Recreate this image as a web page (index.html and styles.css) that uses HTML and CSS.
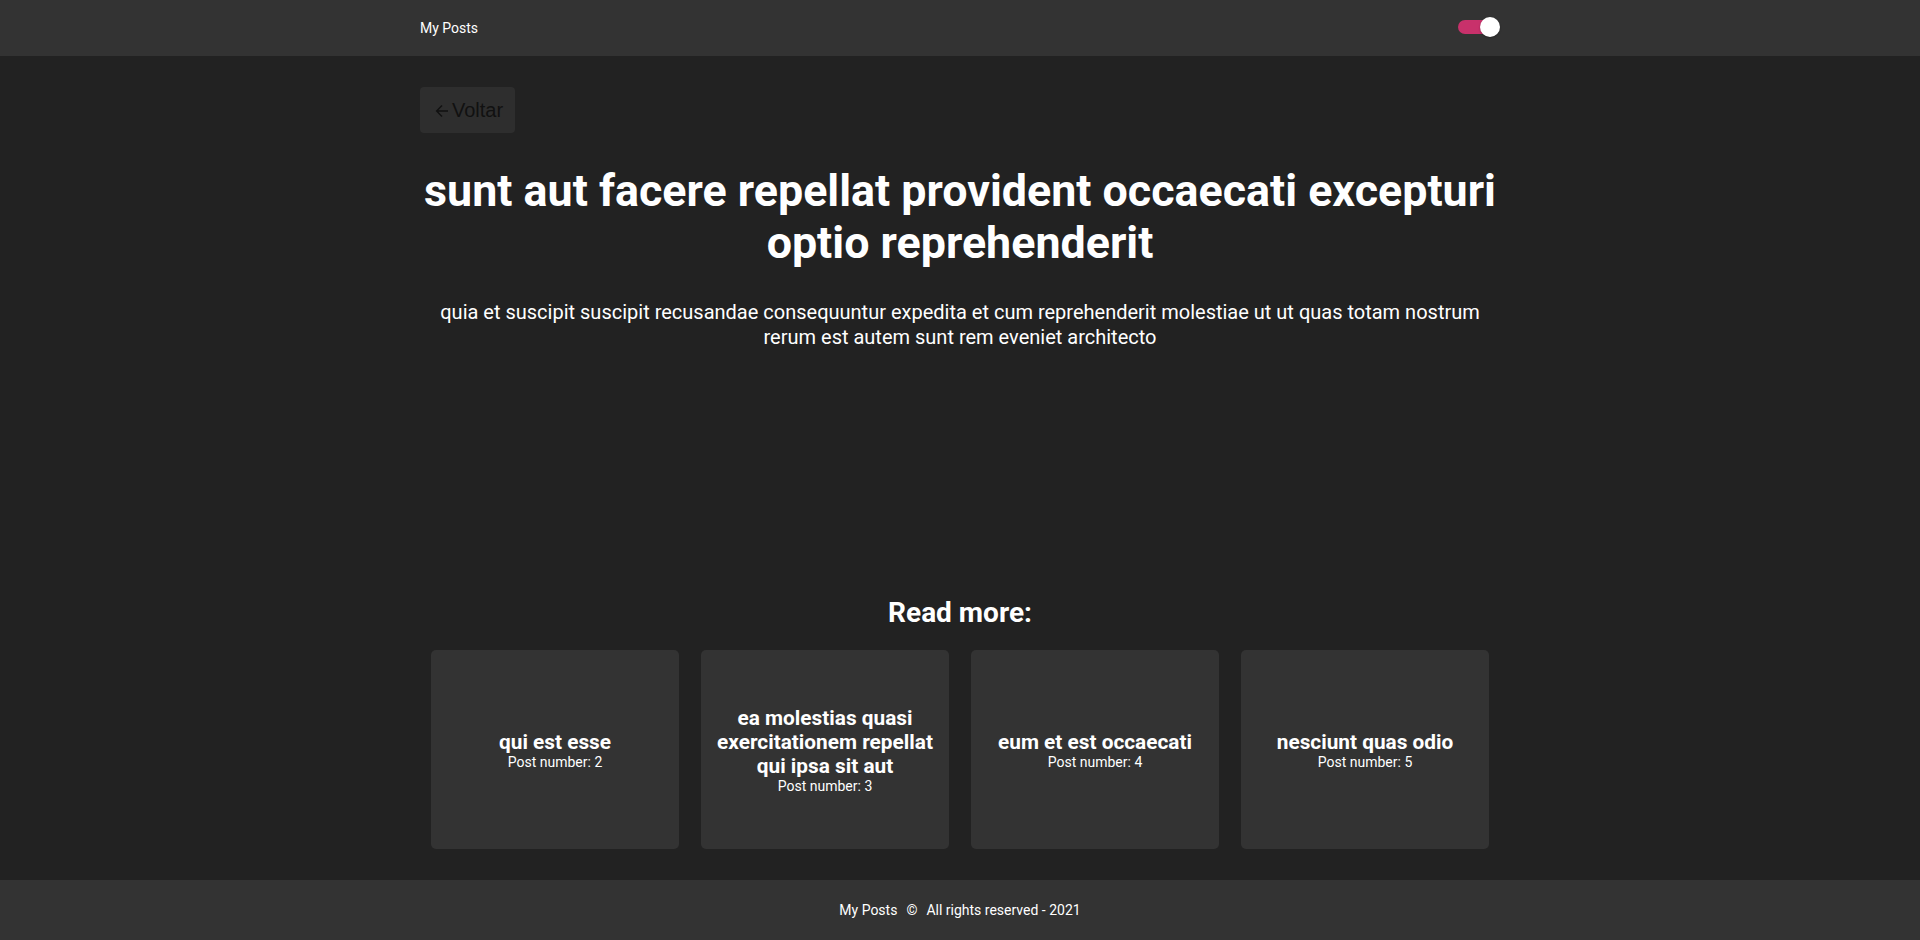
FILE: index.html
```html
<!DOCTYPE html>
<html lang="pt">
<head>
<meta charset="utf-8">
<title>My Posts</title>
<link rel="stylesheet" href="styles.css">
</head>
<body>
<header class="topbar">
  <div class="container topbar-inner">
    <span class="brand">My Posts</span>
    <div class="switch">
      <span class="switch-track"></span>
      <span class="switch-thumb"></span>
    </div>
  </div>
</header>
<main class="container main">
  <button class="back-btn" type="button">
    <svg class="back-icon" viewBox="0 0 14 14" width="14" height="14"><path d="M13 7H1.8M7 1.6L1.6 7 7 12.4" fill="none" stroke="#111" stroke-width="1.4"/></svg>
    <span>Voltar</span>
  </button>
  <h1 class="post-title">sunt aut facere repellat provident occaecati excepturi optio reprehenderit</h1>
  <p class="post-body">quia et suscipit suscipit recusandae consequuntur expedita et cum reprehenderit molestiae ut ut quas totam nostrum rerum est autem sunt rem eveniet architecto</p>
  <section class="related">
    <h2 class="related-title">Read more:</h2>
    <div class="cards">
      <div class="card"><div class="card-title">qui est esse</div><div class="card-num">Post number: 2</div></div>
      <div class="card"><div class="card-title">ea molestias quasi exercitationem repellat qui ipsa sit aut</div><div class="card-num">Post number: 3</div></div>
      <div class="card"><div class="card-title">eum et est occaecati</div><div class="card-num">Post number: 4</div></div>
      <div class="card"><div class="card-title">nesciunt quas odio</div><div class="card-num">Post number: 5</div></div>
    </div>
  </section>
</main>
<footer class="footer">
  <span>My Posts</span><span class="copy">©</span><span>All rights reserved - 2021</span>
</footer>
</body>
</html>
```

FILE: styles.css
```css
* { box-sizing: border-box; }
html, body { margin: 0; padding: 0; }
body {
  background: #222222;
  color: #ffffff;
  font-family: Roboto, "Noto Sans", Arial, sans-serif;
  min-height: 100vh;
  display: flex;
  flex-direction: column;
}
.container {
  width: 1080px;
  margin: 0 auto;
}
.topbar {
  background: #333333;
  height: 56px;
  flex-shrink: 0;
}
.topbar-inner {
  height: 100%;
  display: flex;
  align-items: center;
  justify-content: space-between;
}
.brand {
  font-size: 14px;
  color: #fff;
}
.switch {
  position: relative;
  width: 42px;
  height: 20px;
  margin-top: -2px;
}
.switch-track {
  position: absolute;
  left: 0;
  top: 3px;
  width: 34px;
  height: 14px;
  border-radius: 7px;
  background: #c8316b;
}
.switch-thumb {
  position: absolute;
  right: 0;
  top: 0;
  width: 20px;
  height: 20px;
  border-radius: 50%;
  background: #ffffff;
  box-shadow: 0 1px 2px rgba(0,0,0,0.3);
}
.main {
  flex: 1;
  display: flex;
  flex-direction: column;
  padding-top: 31px;
}
.back-btn {
  align-self: flex-start;
  display: flex;
  align-items: center;
  width: 95px;
  height: 46px;
  padding: 0 0 0 15px;
  background: #2e2e2e;
  border: none;
  border-radius: 4px;
  color: #111;
  font-family: "Liberation Sans", Arial, sans-serif;
  font-size: 20px;
}
.back-icon { display: block; margin-right: 3px; margin-top: 1px; }
.post-title {
  margin: 32px 0 31px;
  text-align: center;
  font-size: 44.8px;
  line-height: 52px;
  font-weight: 700;
}
.post-body {
  margin: 0;
  text-align: center;
  font-size: 20px;
  line-height: 25px;
}
.related {
  margin-top: auto;
  padding-bottom: 31px;
}
.related-title {
  margin: 0 0 21px;
  text-align: center;
  font-size: 28px;
  line-height: 33px;
  font-weight: 700;
}
.cards {
  display: grid;
  grid-template-columns: repeat(4, 1fr);
  gap: 22px;
  padding: 0 11px;
}
.card {
  height: 199px;
  background: #333333;
  border-radius: 5px;
  display: flex;
  flex-direction: column;
  justify-content: center;
  align-items: center;
  text-align: center;
  padding: 0 8px;
}
.card-title {
  font-size: 20.8px;
  line-height: 24px;
  font-weight: 700;
}
.card-num {
  font-size: 14px;
  line-height: 16px;
}
.footer {
  background: #333333;
  height: 60px;
  flex-shrink: 0;
  display: flex;
  align-items: center;
  justify-content: center;
  font-size: 14px;
}
.copy { margin: 0 9px; }
```
